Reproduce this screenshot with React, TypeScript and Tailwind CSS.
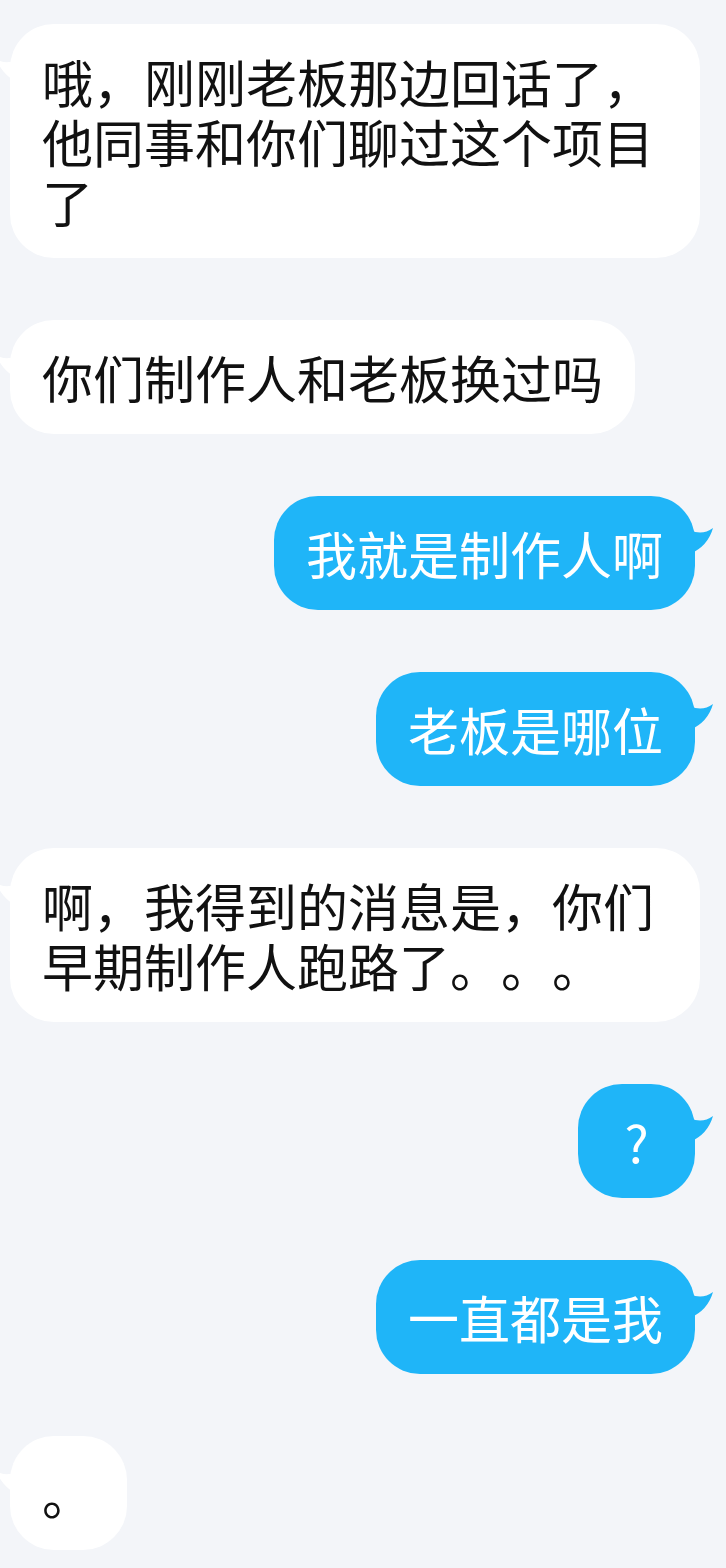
type Msg = { side: "left" | "right"; text: string };

const messages: Msg[] = [
  { side: "left", text: "哦，刚刚老板那边回话了，他同事和你们聊过这个项目了" },
  { side: "left", text: "你们制作人和老板换过吗" },
  { side: "right", text: "我就是制作人啊" },
  { side: "right", text: "老板是哪位" },
  { side: "left", text: "啊，我得到的消息是，你们早期制作人跑路了。。。" },
  { side: "right", text: "?" },
  { side: "right", text: "一直都是我" },
  { side: "left", text: "。" },
];

function Tail({ side }: { side: "left" | "right" }) {
  if (side === "right") {
    return (
      <svg
        className="absolute top-[30px] right-[-19px] text-[#1fb5f8]"
        width="24"
        height="30"
        viewBox="0 0 24 30"
        fill="currentColor"
      >
        <path d="M0 4 Q12 10 23 2 Q18 20 0 28 Z" />
      </svg>
    );
  }
  return (
    <svg
      className="absolute top-[32px] left-[-14px] text-white"
      width="20"
      height="28"
      viewBox="0 0 20 28"
      fill="currentColor"
    >
      <path d="M20 4 Q10 9 0 3 Q6 18 20 26 Z" />
    </svg>
  );
}

function Bubble({ side, text }: Msg) {
  const isRight = side === "right";
  return (
    <div
      className={
        isRight
          ? "relative self-end mr-[31px] min-w-[117px] rounded-[44px] bg-[#1fb5f8] px-[32px] py-[27px] text-center text-white"
          : "relative self-start max-w-[690px] min-w-[117px] rounded-[44px] bg-white px-[32px] py-[27px] text-[#111]"
      }
    >
      <Tail side={side} />
      <p className="text-[51px] leading-[60px] break-all [text-spacing-trim:space-all]">{text}</p>
    </div>
  );
}

export default function App() {
  return (
    <div
      className="min-h-[1568px] w-[726px] bg-[#f3f5f9] pl-[10px] pt-[24px] pb-[20px]"
      style={{ fontFamily: '"Noto Sans CJK SC", "Noto Sans", sans-serif' }}
    >
      <div className="flex flex-col gap-[62px]">
        {messages.map((m, i) => (
          <Bubble key={i} side={m.side} text={m.text} />
        ))}
      </div>
    </div>
  );
}
